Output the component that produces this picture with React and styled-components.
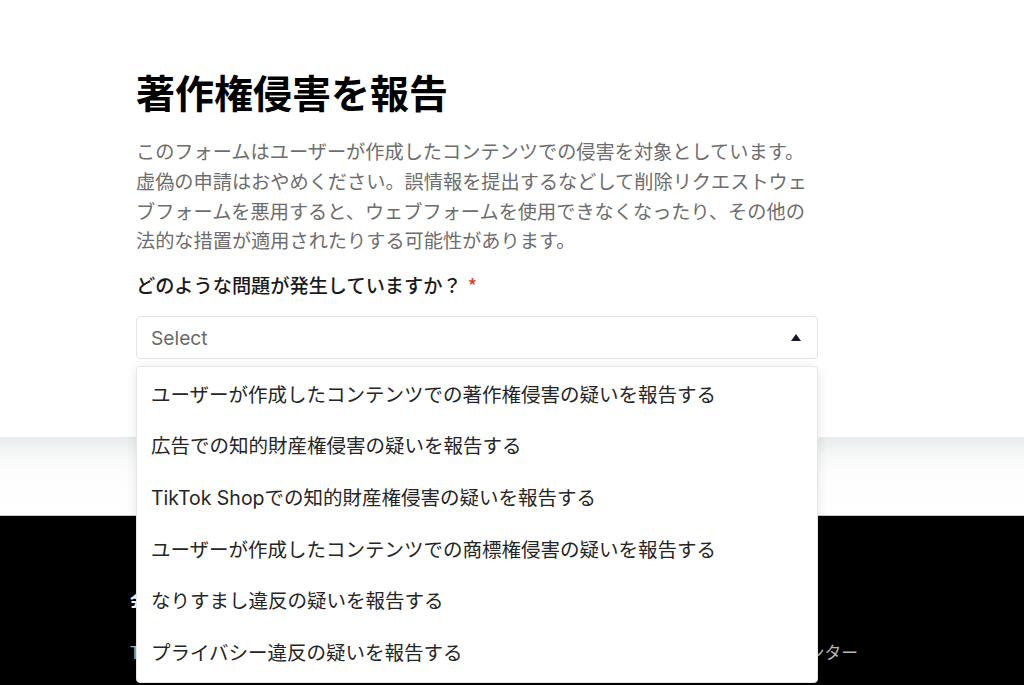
import React from "react";
import styled, { createGlobalStyle } from "styled-components";

const Global = createGlobalStyle`
  html, body { margin: 0; padding: 0; background: #fff; }
  body { font-family: Inter, "Noto Sans CJK JP", sans-serif; color: #161823; }
  * { box-sizing: border-box; }
`;

const Page = styled.div`
  display: flex;
  flex-direction: column;
  min-height: 685px;
  overflow: hidden;
`;

const Main = styled.main`
  background: #fff;
  height: 437px;
  padding: 67px 0 0 136px;
  position: relative;
  z-index: 2;
`;

const Content = styled.div`
  width: 682px;
  position: relative;
`;

const Title = styled.h1`
  margin: 0;
  font-size: 39px;
  line-height: 48px;
  font-weight: 700;
  color: #000;
  font-family: "Noto Sans CJK JP", sans-serif;
`;

const Intro = styled.p`
  margin: 22px 0 0;
  font-size: 19.2px;
  line-height: 29.8px;
  color: #6d6d6d;
  font-family: "Noto Sans CJK JP", sans-serif;
`;

const Label = styled.div`
  margin-top: 16px;
  font-size: 19.2px;
  line-height: 26px;
  font-weight: 500;
  color: #1a1a1a;
  font-family: "Noto Sans CJK JP", sans-serif;
`;

const Required = styled.span`
  color: #e8382f;
  margin-left: 6px;
`;

const SelectBox = styled.div`
  margin-top: 18px;
  height: 43px;
  border: 1px solid #e3e3e3;
  border-radius: 4px;
  display: flex;
  align-items: center;
  justify-content: space-between;
  padding: 0 16px 0 14px;
  font-size: 19.2px;
  color: #6a6a6a;
`;

const Menu = styled.ul`
  position: absolute;
  left: 0;
  right: 0;
  top: calc(100% + 7px);
  margin: 0;
  padding: 0 0 5px;
  list-style: none;
  background: #fff;
  border: 1px solid #e6e6e6;
  border-radius: 4px;
  box-shadow: 0 2px 12px rgba(0, 0, 0, 0.1);
  z-index: 10;
`;

const FieldWrap = styled.div`
  position: relative;
`;

const Item = styled.li`
  height: 51.7px;
  display: flex;
  align-items: center;
  padding-left: 14px;
  font-size: 19.5px;
  color: #252525;
  white-space: nowrap;
`;

const Band = styled.div`
  height: 78px;
  background: linear-gradient(#e7ebeb 0px, #f6f8f8 18px, #fdfdfd 36px, #fff 78px);
`;

const Footer = styled.footer`
  background: #000;
  border-top: 1px solid #c8c8c8;
  flex: 1;
  padding: 68px 166px 0 130px;
  font-family: "Noto Sans CJK JP", sans-serif;
`;

const FooterHeading = styled.div`
  color: #fff;
  font-size: 16.8px;
  font-weight: 700;
  line-height: 32px;
`;

const FooterLinks = styled.div`
  display: flex;
  justify-content: space-between;
  margin-top: 20px;
  font-size: 16.8px;
  color: #b5b5b5;
  line-height: 32px;
`;

const items = [
  "ユーザーが作成したコンテンツでの著作権侵害の疑いを報告する",
  "広告での知的財産権侵害の疑いを報告する",
  "TikTok Shopでの知的財産権侵害の疑いを報告する",
  "ユーザーが作成したコンテンツでの商標権侵害の疑いを報告する",
  "なりすまし違反の疑いを報告する",
  "プライバシー違反の疑いを報告する",
];

export default function App() {
  return (
    <Page>
      <Global />
      <Main>
        <Content>
          <Title>著作権侵害を報告</Title>
          <Intro>
            このフォームはユーザーが作成したコンテンツでの侵害を対象としています。虚偽の申請はおやめください。誤情報を提出するなどして削除リクエストウェブフォームを悪用すると、ウェブフォームを使用できなくなったり、その他の法的な措置が適用されたりする可能性があります。
          </Intro>
          <Label>
            どのような問題が発生していますか？<Required>*</Required>
          </Label>
          <FieldWrap>
            <SelectBox>
              <span>Select</span>
              <svg width="10" height="7" viewBox="0 0 10 7">
                <path d="M5 0 L10 7 L0 7 Z" fill="#161823" />
              </svg>
            </SelectBox>
            <Menu>
              {items.map((t) => (
                <Item key={t}>{t}</Item>
              ))}
            </Menu>
          </FieldWrap>
        </Content>
      </Main>
      <Band />
      <Footer>
        <FooterHeading>会社</FooterHeading>
        <FooterLinks>
          <span>TikTokについて</span>
          <span>ヘルプセンター</span>
        </FooterLinks>
      </Footer>
    </Page>
  );
}
